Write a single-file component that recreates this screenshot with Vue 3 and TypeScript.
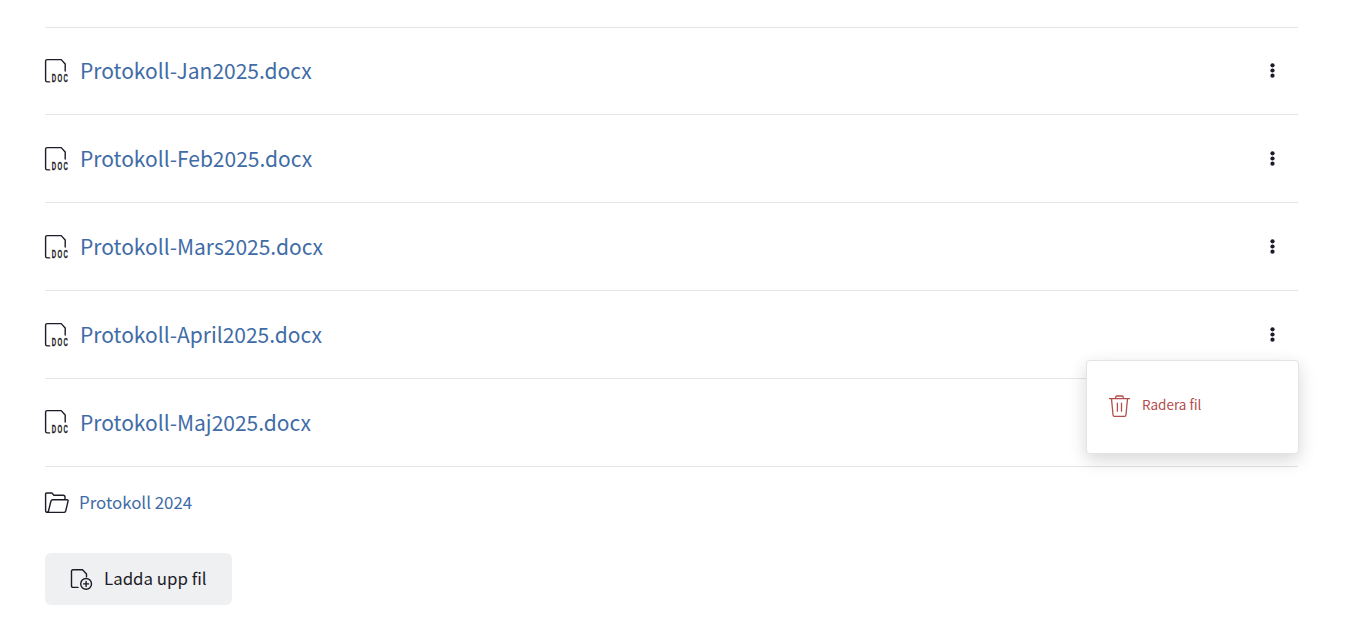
<script setup lang="ts">
const files: { name: string; open?: boolean; last?: boolean }[] = [
  { name: 'Protokoll-Jan2025.docx' },
  { name: 'Protokoll-Feb2025.docx' },
  { name: 'Protokoll-Mars2025.docx' },
  { name: 'Protokoll-April2025.docx', open: true },
  { name: 'Protokoll-Maj2025.docx', last: true },
]
</script>

<template>
  <main class="page">
    <ul class="files">
      <li v-for="file in files" :key="file.name" class="row">
        <svg class="doc" :class="{ raised: file.last }" width="26" height="26" viewBox="0 0 26 26">
          <path d="M4.6 22.9H2.2Q.6 22.9.6 21.3V2.2Q.6.6 2.2.6H16.2L20.2 5V12" />
          <text transform="translate(6.8 23.2) scale(.55 1)" x="0 10.4 21.2">DOC</text>
        </svg>
        <a class="name">{{ file.name }}</a>
        <button v-if="!file.last" class="more" aria-label="Meny">
          <svg width="6" height="16" viewBox="0 0 6 16">
            <circle cx="2.5" cy="2.3" r="2.1" />
            <circle cx="2.5" cy="7.5" r="2.1" />
            <circle cx="2.5" cy="12.7" r="2.1" />
          </svg>
        </button>
        <div v-if="file.open" class="menu">
          <svg width="22" height="24" viewBox="0 0 22 24">
            <path d="M.5 4.6H20.5M2.5 4.8L4 20.7Q4.1 22.3 5.4 22.3H15.6Q16.9 22.3 17 20.7L18.5 4.8M6.7 4.4V3.4Q6.7 2 7.9 2H13.1Q14.3 2 14.3 3.4V4.4M8.4 9.2V17.2M12.5 9.2V17.2" />
          </svg>
          <span>Radera fil</span>
        </div>
      </li>
    </ul>
    <div class="folder">
      <svg width="26" height="22" viewBox="0 0 26 22">
        <path d="M2.5 20.4Q.6 20.4.6 18.5V2Q.6 1 1.7 1H6.9L8.9 3.3H18.1Q20 3.3 20 5.2V7.5M2.5 20.4H18.9Q20.3 20.4 20.7 19L23 9.3Q23.5 7.7 21.9 7.7H7.8Q6.3 7.7 5.9 9.2L3.5 19Q3.2 20.4 2 20.3" />
      </svg>
      <a>Protokoll 2024</a>
    </div>
    <button class="upload">
      <svg width="23" height="22" viewBox="0 0 23 22">
        <path d="M8 18.4H3Q1.5 18.4 1.5 16.9V2.3Q1.5.8 3 .8H12.5L16.5 5V7.8" />
        <circle cx="16.1" cy="14.9" r="5.4" />
        <path d="M16.1 12.4V17.4M13.6 14.9H18.6" />
      </svg>
      <span>Ladda upp fil</span>
    </button>
  </main>
</template>

<style>
body {
  margin: 0;
  background: #fff;
}
</style>

<style scoped>
.page {
  box-sizing: border-box;
  height: 626px;
  padding: 27px 50px 0 45px;
  font-family: "Noto Sans CJK JP", "Noto Sans", sans-serif;
  color: #1c1c28;
}
svg {
  display: block;
  flex: none;
  overflow: visible;
  fill: none;
  stroke: #1c1c28;
  stroke-width: 1.4;
  stroke-linejoin: round;
  stroke-linecap: round;
}
.files {
  list-style: none;
  margin: 0;
  padding: 0;
  border-bottom: 1px solid #e3e4e6;
}
.row {
  position: relative;
  box-sizing: border-box;
  display: flex;
  align-items: center;
  height: 88px;
  border-top: 1px solid #e3e4e6;
}
.row:first-child {
  height: 87px;
}
.doc {
  margin-top: 2px;
}
.doc text {
  font: bold 11px "Liberation Sans", sans-serif;
  fill: #1c1c28;
  stroke: #1c1c28;
  stroke-width: 0.25;
}
.doc.raised {
  margin-top: 0;
}
.name {
  margin-left: 9px;
  padding-bottom: 2px;
  color: #3f6ca6;
  font-size: 21px;
  line-height: 32px;
}
.row:first-child .name {
  padding-bottom: 3px;
}
button {
  border: 0;
  background: none;
  font: inherit;
  color: inherit;
}
.more {
  margin-left: auto;
  margin-right: 22px;
  padding: 0;
}
.more svg {
  fill: #1c1c28;
  stroke: none;
}
.menu {
  position: absolute;
  z-index: 2;
  top: 69px;
  right: -1px;
  box-sizing: border-box;
  width: 213px;
  height: 94px;
  padding: 0 22px 2px;
  display: flex;
  align-items: center;
  gap: 11px;
  border: 1px solid #e3e4e6;
  border-radius: 4px;
  background: #fff;
  box-shadow: 0 6px 18px rgba(0, 0, 0, 0.16);
  color: #b34d4b;
  font-size: 13.5px;
}
.menu span {
  padding-bottom: 4px;
}
.menu svg {
  stroke: #b34d4b;
  stroke-width: 1.3;
}
.folder {
  display: flex;
  align-items: center;
  height: 72px;
  font-size: 16.85px;
}
.folder a {
  margin-left: 8px;
  padding-bottom: 4px;
  color: #3f6ca6;
}
.upload {
  display: flex;
  align-items: center;
  width: 187px;
  height: 52px;
  margin-top: 14px;
  padding: 0 25px;
  border-radius: 6px;
  background: #eff0f2;
  font-size: 16.85px;
  white-space: nowrap;
}
.upload svg {
  margin-top: 2px;
}
.upload span {
  margin-left: 11px;
  padding-bottom: 3px;
}
</style>
